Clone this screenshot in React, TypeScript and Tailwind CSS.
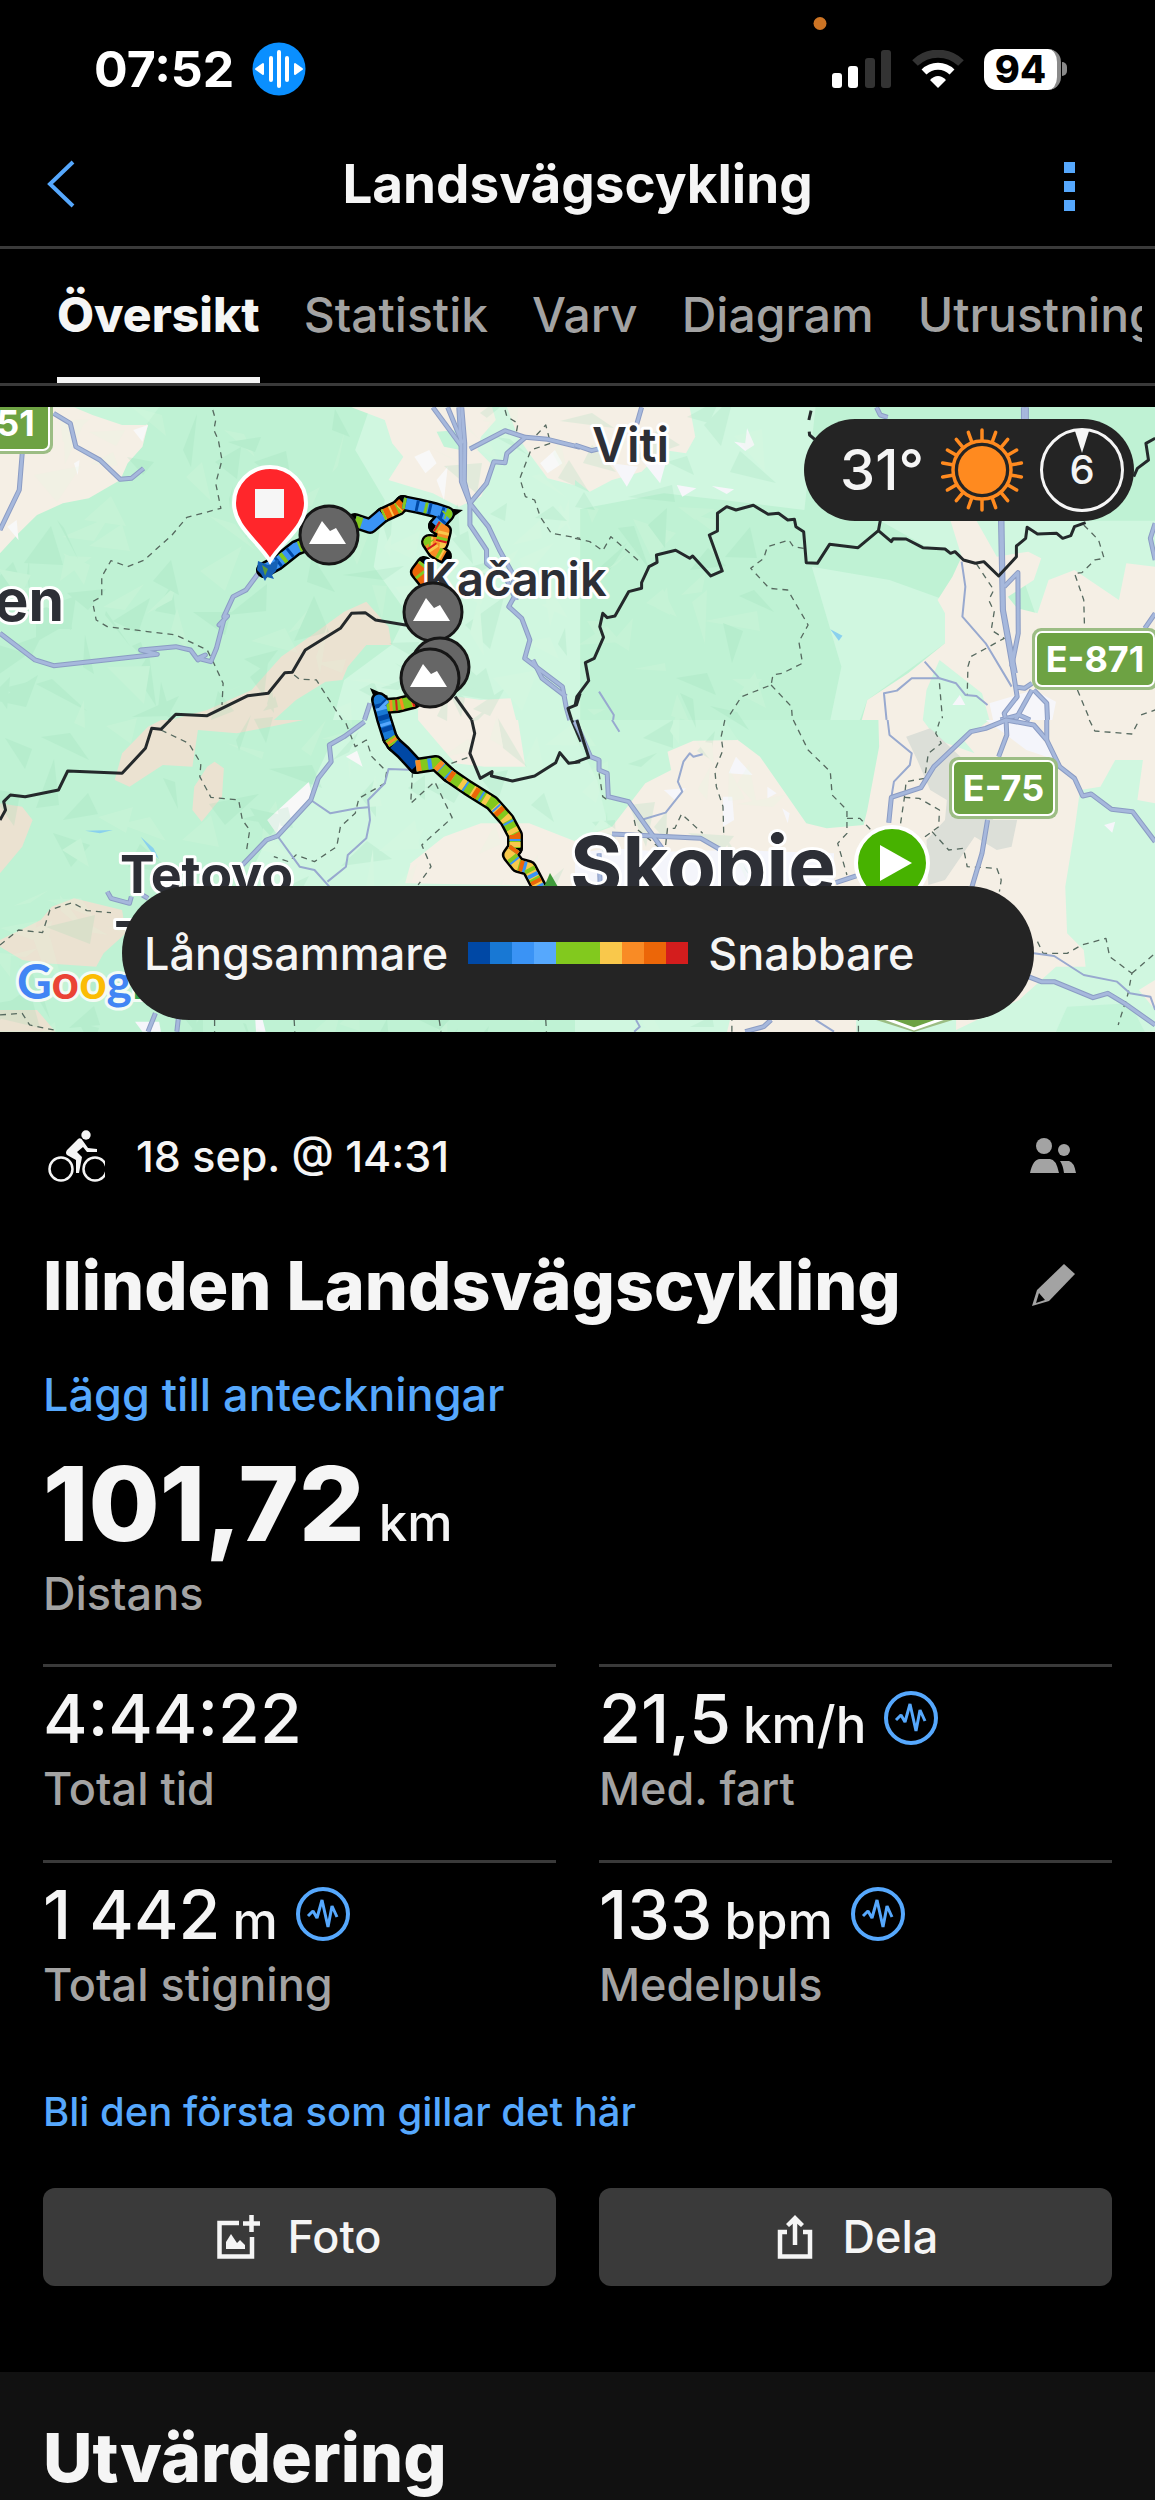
import { useState } from 'react';

const TABS = ['Översikt', 'Statistik', 'Varv', 'Diagram', 'Utrustning'];

const SPEED_COLORS = [
  'bg-[#0048a5]', 'bg-[#1878d4]', 'bg-[#3a93f5]', 'bg-[#56a8fd]', 'bg-[#82c91e]',
  'bg-[#82c91e]', 'bg-[#f9c84b]', 'bg-[#f98b25]', 'bg-[#ec6608]', 'bg-[#d41d1d]',
];

interface Stat {
  value: string;
  unit?: string;
  label: string;
  sensor?: boolean;
}

const STATS: Stat[] = [
  { value: '4:44:22', label: 'Total tid' },
  { value: '21,5', unit: 'km/h', label: 'Med. fart', sensor: true },
  { value: '1 442', unit: 'm', label: 'Total stigning', sensor: true },
  { value: '133', unit: 'bpm', label: 'Medelpuls', sensor: true },
];

interface Tile {
  transform: string;
  areas: [string, string][];
  roads: string[];
  lanes: string[];
  trails: string[];
  borders: string[];
}

// The map is stored as four tiles, each with its own local grid
const TILES: Tile[] = [
  {
    transform: 'matrix(0.37 0 0 0.3333 0 -7)',
    areas: [
      ['#d0f7e0', 'M1000 22H1568V960H900L930 840L1058 735L1100 640L1010 500L1040 300L960 150Z'],
      ['#f5efe5', 'M0 22H320L400 75L385 140L345 190L325 240L240 295L170 310L100 345L50 400L0 460Z'],
      ['#c8f5da', 'M200 22H430L395 75L330 75L250 45Z'],
      ['#f5efe5', 'M950 22H1330L1340 60L1300 110L1290 150L1335 200L1300 290L1240 320L1170 280L1110 260L1050 240L1090 170L1060 130L1040 60Z'],
      ['#f5efe5', 'M1370 22H1568V260L1480 235L1430 160L1400 110Z'],
      ['#c4f4d8', 'M1180 95L1240 90L1245 150L1200 140Z'],
      ['#f8f8f8', 'M1120 170L1160 150L1180 190L1150 220ZM1180 240L1210 200L1200 300ZM1460 190L1500 150L1520 190L1480 220ZM360 90L400 75L385 125ZM200 190L215 180L210 225ZM20 380L45 360L50 420Z'],
      ['#ebe2d1', 'M990 605L1050 680L1058 735L990 735L940 800L925 840L880 845L800 900L740 960H460L560 930L680 870L760 770L850 700L930 635Z'],
      ['#f5efe5', 'M1130 900L1240 890L1300 900L1380 895L1395 960H1130Z'],
    ],
    roads: [
      '145 40 190 70 205 140 270 180 325 238 355 235 388 205',
      '60 160 52 270 0 390',
      '705 510 665 570 630 590 605 650 615 648 592 675 605 660 585 745 570 785 535 775 555 765 535 780 515 750 475 740 380 750 425 763 145 797 95 780 0 700',
      '1240 22 1246 130 1247 245 1270 310 1270 375 1315 450 1315 490 1370 540 1390 590 1375 620 1410 655 1432 720 1418 775 1460 810 1520 860 1530 920 1540 960',
      '1248 22 1256 130 1255 245 1270 310',
      '1170 22 1245 135',
      '1210 22 1250 130',
      '1270 147 1365 92 1420 112 1480 118 1568 142',
      '1420 112 1370 160 1365 188 1335 185 1315 250 1270 310 1320 380 1350 450 1385 520 1395 600',
      '1440 780 1465 835 1530 890',
      '1000 910 985 960',
    ],
    lanes: [],
    trails: [
      '575 30 583 60 578 90 590 120 600 180 583 250 597 325 505 352 465 405 390 480 345 500 300 482 275 530 275 590 250 605 260 660 290 680 475 705 560 750 578 790 603 850 600 915',
      '1365 30 1370 50 1400 70 1395 100',
      '1450 105 1475 75 1488 130 1435 150 1405 235 1420 290 1445 300 1460 350 1490 400 1568 415',
      '795 825 810 838 855 840 925 960',
    ],
    borders: [
      '1100 676 1015 660 987 638 950 640 920 685 825 750 790 817 770 818 725 880 670 887 560 947 475 943 458 962',
      '1230 890 1275 960',
      '1568 880 1558 915 1535 925 1545 960',
    ],
  },
  {
    transform: 'matrix(0.37 0 0 0.3333 575 -7)',
    areas: [
      ['#d0f7e0', 'M0 22H650L620 330L400 300L240 280L0 330Z'],
      ['#d0f7e0', 'M640 500L850 540L1000 600L1000 730L790 900L770 960L690 960L720 800Z'],
      ['#f5efe5', 'M0 22H310L325 110L300 160L240 150L180 215L100 240L40 275L0 240Z'],
      ['#d0f7e0', 'M825 362H1568V620L1250 660L1200 500L950 440Z'],
      ['#f5efe5', 'M1015 362H1085L1140 470L1225 455L1260 475L1240 540L1170 590L1195 625L1250 640L1280 540L1350 510L1470 600L1490 490L1568 500V960H775L790 900L900 820L1000 730V640L980 600L1020 530L1045 470Z'],
      ['#d0f7e0', 'M985 780L1100 880L1120 960H940L950 870Z'],
      ['#f6f6fa', 'M430 125L460 130L465 85L485 135L460 153ZM275 255L328 265L290 290ZM370 258L430 268L410 282ZM100 190L170 200L140 260ZM180 180L245 190L230 250ZM1120 910L1240 870L1300 905L1290 960H1130ZM1020 915L1040 885L1055 915Z'],
      ['#8ad1ee', 'M690 688L723 707L713 722Z'],
    ],
    roads: [
      '1212 22 1212 60',
      '1220 22 1220 60',
      '1150 362 1155 630 1185 820 1195 890 1160 940 1165 960',
      '1154 362 1158 630 1190 820',
      '1160 560 1197 518 1198 700 1180 800',
      '1195 862 1215 865 1235 850',
      '1235 870 1190 960',
      '1240 870 1275 910 1277 960',
      '1150 960 1200 945 1230 960',
      '1568 370 1555 415 1568 480',
      '1568 640 1540 685',
      '815 22 825 45 845 52',
      '0 135 45 152 70 145',
      '180 22 165 80',
    ],
    lanes: [
      '1045 485 1055 560 1047 650 1110 730 1180 860',
      '842 960 835 880 870 872 910 835 985 835 945 785',
      '985 835 1030 850 1055 885 1085 888 1115 915',
      '65 875 105 945 103 960',
    ],
    trails: [
      '0 415 40 425 75 452 97 410 180 490',
      '618 445 590 440 578 420 520 440 510 475 475 505 525 565 575 570 630 675 605 725 615 790 560 820 535 825 530 855 450 890 415 950',
      '530 855 585 920 587 950',
      '1085 492 1132 570 1118 600 1133 635 1125 690 1160 715 1070 770 1062 800 1060 885',
      '1375 375 1415 420 1430 475 1405 480 1370 518 1350 520 1375 600 1377 680',
      '1358 870 1388 950',
      '985 850 993 955',
      '1530 945 1568 930',
    ],
    borders: [
      '0 918 5 890 37 842 28 788 52 775 77 712 67 680 75 640 87 653 108 648 145 575 180 565 180 548 200 500 222 487 220 465 272 451 310 475 318 468 367 528 398 513 363 405 385 393 385 340 410 320 435 330 482 316 522 343 550 340 575 360 593 358 597 380 618 395 625 488 655 490 688 433 765 443 820 392 825 362',
      '638 32 632 60',
      '633 95 634 105 648 118',
      '820 392 855 425 860 416 895 417 940 443 1000 447 1015 460 1027 455 1050 480 1082 490 1105 485 1145 528 1193 470 1193 438 1218 415 1222 382 1250 402 1302 400 1318 415 1340 407 1350 380 1380 368',
      '1510 230 1520 205 1550 180 1543 130 1568 115',
    ],
  },
  {
    transform: 'matrix(0.37 0 0 0.3333 0 313)',
    areas: [
      ['#d0f7e0', 'M985 0H1568V500H660L720 360L840 200L890 80Z'],
      ['#f8f8f8', 'M835 185L845 240L750 345L722 300ZM935 110L965 92L980 140Z'],
      ['#f5efe5', 'M1130 0H1400L1420 140L1310 140L1230 130Z'],
      ['#f5efe5', 'M1095 490L1110 430L1200 350L1300 310L1430 310L1568 370V500Z'],
      ['#ebe2d1', 'M435 0H820L640 40L535 30L520 140L440 135L350 200L310 180L330 100L400 20Z'],
      ['#ebe2d1', 'M580 125L605 145L600 230L545 305L520 270L525 200L560 140Z'],
      ['#ebe2d1', 'M0 250L60 260L88 300L60 380L0 460Z'],
      ['#ebe2d1', 'M0 660L110 600L140 560L200 535L330 570L340 640L280 700L260 740L120 730L60 720L0 680Z'],
      ['#ebe2d1', 'M0 870L100 870L150 935H0Z'],
      ['#8ad1ee', 'M230 332L305 330L270 340ZM380 350L415 385L430 418L405 390Z'],
      ['#f6f6fa', 'M365 905H430L435 935H385ZM690 900H710L718 935H692Z'],
      ['#42a05c', 'M360 800L375 820V838H362Z'],
    ],
    roads: [
      '985 5 930 50 890 75 895 125 860 175 840 240 750 348 720 360 655 435',
      '290 515 300 535 350 550 355 530',
      '385 525 400 535',
      '420 880 400 935',
      '482 895 478 935',
      '1555 0 1568 40',
    ],
    lanes: [
      '840 240 893 280 965 265 995 262',
      '1125 150 1050 147 1040 190 995 240 1000 300 990 355 940 405 935 440 885 485',
      '750 348 810 440 850 450 890 500',
    ],
    trails: [
      '435 30 510 70 543 130 540 170 570 232 645 240 655 300 675 330 665 400',
      '935 10 960 80 990 60 1005 110 1045 155 1040 190 970 235 960 280 920 320 910 380 850 425 800 405 780 425 740 410',
      '1115 155 1110 250 1175 185 1222 293 1140 375 1165 440 1130 495',
      '1220 130 1270 110',
      '0 675 50 630 115 638 135 570 195 548 235 572 300 578',
      '0 885 60 880 80 915 145 930',
      '580 900 580 935',
      '795 900 797 935',
      '1187 900 1192 935',
      '1475 900 1477 935',
    ],
    borders: [
      '460 0 435 28 410 25 393 85 330 160 183 153 158 210 68 230 28 225 10 245 15 270 0 300',
      '1275 0 1283 40 1270 100 1298 175 1330 155 1328 168 1385 183 1445 168 1502 128 1513 98 1537 130 1568 125',
      '1545 0 1570 65',
    ],
  },
  {
    transform: 'matrix(0.37 0 0 0.3333 575 313)',
    areas: [
      ['#f5efe5', 'M0 0H1568V940H0Z'],
      ['#c8f5da', 'M0 0H420L440 60L320 62L250 95L260 150L190 190L100 320L0 360Z'],
      ['#d0f7e0', 'M0 50L60 180L90 320L0 360Z'],
      ['#c3f4d8', 'M405 0H820L822 80L790 270L780 315L680 325L625 310L500 110L440 60Z'],
      ['#d0f7e0', 'M940 0H1120L1050 60L1080 100L980 60Z'],
      ['#dcdfd8', 'M895 50L960 25L1060 130L1130 300L1195 300L1180 380L1140 390L1080 350L1000 480L955 495L950 360L1000 300L1005 240L960 210L925 120Z'],
      ['#f4f5fb', 'M1110 0H1230L1300 120L1220 90L1160 40Z'],
      ['#d0f7e0', 'M1325 500L1350 330L1365 210L1420 200L1460 120L1535 120L1520 240L1568 250V935H1020L1200 840L1300 740L1380 740L1375 690L1330 640Z'],
      ['#c3f4d8', 'M1330 860L1500 850L1540 935H1300Z'],
      ['#f5efe5', 'M1524 810L1568 780V870Z'],
      ['#d0f7e0', 'M0 895H420L410 940H0ZM760 895H1030V940H760Z'],
      ['#f6f6fa', 'M415 160L435 110L480 165ZM400 230H425L430 300L400 320ZM520 200L545 220L520 235ZM560 265L580 280L575 310ZM240 210L300 205L270 240ZM1430 315L1460 305L1452 338Z'],
      ['#f4f5fb', 'M0 400L100 385L240 395L420 390L700 400V500H0Z'],
    ],
    roads: [
      '0 5 15 40 42 110 65 120 65 150 87 160 90 230 145 245 235 385',
      '100 342 340 355 395 390',
      '848 308 855 232 935 203 970 140 1070 35 1110 25 1165 0 1240 15 1275 60 1310 140 1350 175 1372 228 1395 222 1450 268 1507 275 1568 365',
      '1165 0 1167 45 1145 110',
      '1115 300 1100 400 1073 500',
      '1275 0 1275 60',
      '1225 770 1260 785 1295 785 1400 833 1440 820 1485 850 1568 915',
      '705 488 760 468',
      '65 400 68 495',
      '460 935 510 920 530 900',
    ],
    lanes: [
      '185 298 245 278 290 215 278 185 293 125 310 100 320 110 345 103',
      '845 0 850 45 910 100 905 135 862 185 855 232',
      '1240 700 1295 708 1375 765 1465 785 1500 820 1555 830 1568 870',
      '100 0 120 35',
      '160 935 175 920 165 900',
      '650 900 700 935',
    ],
    trails: [
      '405 0 395 50 400 90 378 150 382 200 400 260 402 345',
      '590 0 630 90 690 155 695 225 735 270 735 340 710 370 735 465',
      '735 295 770 295 800 330',
      '880 310 890 235 895 185 945 175 955 100 990 70 975 40 985 5',
      '890 232 930 235 985 270 983 320 940 355',
      '965 335 1010 390 1050 385 1060 440 1140 445 1152 480 1147 515',
      '1250 665 1265 700 1330 700 1370 675 1435 655 1445 710 1505 760 1495 820 1468 915',
      '1505 760 1568 700',
      '1390 0 1405 33 1505 42 1525 0',
      '245 375 250 325 270 325 288 282 345 340',
      '160 300 165 325 235 390',
      '65 160 75 230 95 245',
      '424 935 424 900',
      '766 935 766 900',
    ],
    borders: ['5 0 37 112 0 127'],
  },
];

interface Leg {
  points: string;
  color: string;
  stripes: [string, string][];
}

const LEGS: Leg[] = [
  { points: '264,163 277,156 296,141 306,137', color: '#3a93f5', stripes: [['#82c91e', '4 17'], ['#0048a5', '3 12']] },
  { points: '355,114 370,119 383,108', color: '#3a93f5', stripes: [['#82c91e', '7 30']] },
  { points: '383,108 398,101 403,96', color: '#ec6608', stripes: [['#f9c84b', '2 6'], ['#82c91e', '2 13']] },
  { points: '403,96 418,99 435,103 447,107 436,119', color: '#3a93f5', stripes: [['#0048a5', '3 10'], ['#82c91e', '3 19']] },
  { points: '436,119 444,124 441,136 429,135 435,144 444,149', color: '#f98b25', stripes: [['#f9c84b', '3 7'], ['#82c91e', '3 13'], ['#d41d1d', '2 17']] },
  { points: '424,157 418,165 426,175', color: '#ec6608', stripes: [['#82c91e', '3 9']] },
  { points: '414,294 398,298 385,299', color: '#82c91e', stripes: [['#f98b25', '3 8'], ['#d41d1d', '2 15']] },
  { points: '385,299 379,293 384,312 390,331', color: '#1878d4', stripes: [['#0048a5', '5 7'], ['#56a8fd', '3 13']] },
  { points: '390,331 394,337', color: '#f98b25', stripes: [['#82c91e', '2 3']] },
  { points: '394,337 403,345 416,359', color: '#0048a5', stripes: [] },
  { points: '416,359 436,356 449,368', color: '#82c91e', stripes: [['#3a93f5', '4 8'], ['#f98b25', '5 17']] },
  { points: '449,368 468,381 492,396 507,413 515,428 515,441', color: '#82c91e', stripes: [['#f9c84b', '5 9'], ['#3a93f5', '2 17'], ['#ec6608', '5 25']] },
  { points: '515,441 510,448 518,458 529,461 540,482', color: '#f9c84b', stripes: [['#3a93f5', '4 9'], ['#82c91e', '4 7'], ['#ec6608', '4 19']] },
];

const CLIMBS = [[329, 128], [433, 205], [440, 260], [430, 271]];

// Small deterministic generator so that the hill shading is stable between renders
function buildFacets(count: number) {
  let seed = 41;
  const rnd = () => {
    seed = (seed * 16807) % 2147483647;
    return seed / 2147483647;
  };
  return Array.from({ length: count }, () => {
    const x = rnd() * 760;
    const y = rnd() * 640;
    const pts = [0, 1, 2].map((i) => {
      const a = (i + rnd()) * 2.09;
      const r = 6 + rnd() * 26;
      return `${Math.round(x + Math.cos(a) * r)},${Math.round(y + Math.sin(a) * r)}`;
    });
    return { points: pts.join(' '), fill: rnd() > 0.5 ? '#8fd9b0' : '#e2fbe0' };
  });
}

const FACETS = buildFacets(320);

function RoadSign({ x, y, width, label }: { x: number; y: number; width: number; label: string }) {
  return (
    <g>
      <rect x={x} y={y} width={width} height="62" rx="9" fill="#9cbd84" />
      <rect x={x + 3} y={y + 3} width={width - 6} height="56" rx="7" fill="#fff" />
      <rect x={x + 5} y={y + 5} width={width - 10} height="52" rx="5" fill="#6da243" />
      <text x={x + width / 2} y={y + 44} textAnchor="middle" fontSize="36" fontWeight="700" fill="#fff">
        {label}
      </text>
    </g>
  );
}

function Pin({ x, y, color, children }: { x: number; y: number; color: string; children: React.ReactNode }) {
  return (
    <g transform={`translate(${x} ${y})`}>
      <path
        d="M0 58C-12 38 -36 24 -36 0A36 36 0 0 1 36 0C36 24 12 38 0 58Z"
        fill={color}
        stroke="#fff"
        strokeWidth="4"
      />
      {children}
    </g>
  );
}

function RouteMap() {
  return (
    <svg viewBox="0 0 1155 625" className="block w-full" role="img" aria-label="Karta">
      <rect width="1155" height="625" fill="#bff2d4" />
      {TILES.map((tile) => (
        <g key={tile.transform} transform={tile.transform}>
          {tile.areas.map(([fill, d]) => (
            <path key={d} d={d} fill={fill} />
          ))}
        </g>
      ))}
      <g opacity="0.18">
        {FACETS.map((f, i) => (
          <polygon key={i} points={f.points} fill={f.fill} />
        ))}
      </g>
      {TILES.map((tile) => (
        <g key={tile.transform} transform={tile.transform} fill="none" strokeLinejoin="round">
          {tile.trails.map((p) => (
            <polyline key={p} points={p} stroke="#56695f" strokeWidth="1.3" strokeDasharray="6 5" vectorEffect="non-scaling-stroke" />
          ))}
          {tile.lanes.map((p) => (
            <polyline key={p} points={p} stroke="#98a9cf" strokeWidth="2" vectorEffect="non-scaling-stroke" />
          ))}
          {tile.roads.map((p) => (
            <polyline key={p} points={p} stroke="#8b9cc4" strokeWidth="5" vectorEffect="non-scaling-stroke" />
          ))}
          {tile.roads.map((p) => (
            <polyline key={`${p}-in`} points={p} stroke="#a6b8dc" strokeWidth="3" vectorEffect="non-scaling-stroke" />
          ))}
          {tile.borders.map((p) => (
            <polyline key={p} points={p} stroke="#24292b" strokeWidth="3" vectorEffect="non-scaling-stroke" />
          ))}
        </g>
      ))}

      {/* activity track: black casing, then each leg with its speed stripes */}
      <g fill="none" strokeLinejoin="round">
        {LEGS.map((leg) => (
          <polyline key={leg.points} points={leg.points} stroke="#000" strokeWidth="16" strokeLinecap="round" />
        ))}
        <path d="M446 101L463 103L446 115ZM370 281L388 289L378 300Z" fill="#000" />
        {LEGS.map((leg) => (
          <g key={leg.points}>
            <polyline points={leg.points} stroke={leg.color} strokeWidth="11" />
            {leg.stripes.map(([color, dash]) => (
              <polyline key={color} points={leg.points} stroke={color} strokeWidth="11" strokeDasharray={dash} />
            ))}
          </g>
        ))}
      </g>
      <path d="M258 154L268 158L279 152L276 164L272 168L274 172L267 170L265 174L261 167L257 163Z" fill="#1661b5" />
      <path d="M262 158L268 162L265 169Z" fill="#5a9a3c" />
      <path d="M544 480L550 466L558 480Z" fill="#3f9a3a" />

      <g fontFamily="Inter, sans-serif" fill="#2d2f36" stroke="#fff" strokeWidth="6" strokeLinejoin="round" paintOrder="stroke">
        <text x="592" y="55" fontSize="48" fontWeight="600">Viti</text>
        <text x="424" y="189" fontSize="47" fontWeight="600">Kačanik</text>
        <text x="64" y="214" fontSize="57" fontWeight="700" textAnchor="end">en</text>
        <text x="120" y="486" fontSize="52" fontWeight="700">Tetovo</text>
        <text x="114" y="553" fontSize="54" fontWeight="600">Т</text>
        <text x="570" y="487" fontSize="80" fontWeight="700">Skopje</text>
      </g>

      {CLIMBS.map(([x, y]) => (
        <g key={`${x}-${y}`} transform={`translate(${x} ${y})`}>
          <circle r="29" fill="#666" stroke="#161616" strokeWidth="3" />
          <path d="M-20 9L-7 -14L1 -4L7 -7L17 9Z" fill="#fff" />
        </g>
      ))}

      <g fontFamily="Inter, sans-serif">
        <RoadSign x={-22} y={-15} width={75} label="51" />
        <RoadSign x={1032} y={221} width={126} label="E-871" />
        <RoadSign x={949} y={350} width={109} label="E-75" />
      </g>
      <path d="M873 612L914 625L956 612V606H873Z" fill="#9cbd84" />
      <path d="M876 608L914 622L953 608Z" fill="#6da243" stroke="#fff" strokeWidth="3" />

      <Pin x={270} y={96} color="#ff262b">
        <rect x="-15" y="-14" width="29" height="29" fill="#f6f6f6" />
      </Pin>
      <Pin x={892} y={456} color="#47b200">
        <path d="M-12 -18L20 0L-12 18Z" fill="#fff" />
      </Pin>

      <text x="17" y="592" fontFamily="Lato, sans-serif" fontSize="48" fontWeight="700" stroke="#f3fbf5" strokeWidth="6" paintOrder="stroke">
        <tspan fill="#4285f4">G</tspan>
        <tspan fill="#ea4335">o</tspan>
        <tspan fill="#fbbc04">o</tspan>
        <tspan fill="#4285f4">g</tspan>
        <tspan fill="#34a853">l</tspan>
        <tspan fill="#ea4335">e</tspan>
      </text>
    </svg>
  );
}

const RAYS = Array.from({ length: 18 }, (_, i) => i * 20);

function SunIcon() {
  return (
    <svg viewBox="-42 -42 84 84" className="size-[84px]" aria-hidden="true">
      <circle r="24" fill="#ff8a1f" />
      <circle r="29" fill="none" stroke="#ff8a1f" strokeWidth="3.5" />
      {RAYS.map((deg) => (
        <line key={deg} y1="-30" y2="-40" stroke="#ff8a1f" strokeWidth="3.5" strokeLinecap="round" transform={`rotate(${deg})`} />
      ))}
    </svg>
  );
}

function SensorIcon() {
  return (
    <svg viewBox="-27 -27 54 54" className="size-[54px]" fill="none" stroke="#56a8fd" aria-hidden="true">
      <circle r="25" strokeWidth="4" />
      <path d="M-15 2L-10 -3L-6 4L-1 -14L5 13L9 -8L14 3" strokeWidth="3" strokeLinejoin="bevel" />
    </svg>
  );
}

function StatusBar() {
  return (
    <div className="relative flex h-[122px] items-center justify-between pt-4 pr-[88px] pl-[94px] text-white">
      <span className="absolute top-[17px] left-[71%] size-[13px] -translate-x-1/2 rounded-full bg-[#cd7424]" />
      <div className="flex items-center gap-[18px]">
        <span className="text-[50px] leading-none font-bold">07:52</span>
        <svg viewBox="-27 -27 54 54" className="size-[54px]" aria-hidden="true">
          <circle r="26.5" fill="#0a8fff" />
          <path d="M-8 -11V11M0 -17V17M8 -11V11" stroke="#fff" strokeWidth="4" strokeLinecap="round" />
          <path d="M-23 0L-16 -5V5ZM23 0L16 -5V5Z" fill="#fff" stroke="#fff" strokeWidth="2" strokeLinejoin="round" />
        </svg>
      </div>
      <div className="flex items-center gap-5">
        <svg viewBox="0 0 60 38" className="h-[38px] w-[60px]" aria-hidden="true">
          <rect x="0" y="23" width="10" height="15" rx="3" fill="#fff" />
          <rect x="16" y="16" width="10" height="22" rx="3" fill="#fff" />
          <rect x="33" y="8" width="10" height="30" rx="3" fill="#333" />
          <rect x="49" y="0" width="10" height="38" rx="3" fill="#333" />
        </svg>
        <svg viewBox="0 0 52 38" className="h-[38px] w-[52px]" fill="none" aria-hidden="true">
          <path d="M3 13A33 33 0 0 1 49 13" stroke="#333" strokeWidth="8" />
          <path d="M12 22A20 20 0 0 1 40 22" stroke="#fff" strokeWidth="7" />
          <path d="M18 30Q26 22 34 30L26 38Z" fill="#fff" />
        </svg>
        <div className="flex items-center gap-px">
          <span className="flex h-[41px] w-[77px] items-center justify-center rounded-[13px] border-r-4 border-[#8a8a8a] bg-white text-[38px] leading-none font-extrabold text-black">
            94
          </span>
          <span className="h-[14px] w-[5px] rounded-r-full bg-[#8a8a8a]" />
        </div>
      </div>
    </div>
  );
}

function StatCell({ stat }: { stat: Stat }) {
  return (
    <div className="h-[196px] border-t-3 border-[#3a3a3a] pt-[17px]">
      <div className="flex h-[68px] items-center">
        <p className="flex items-baseline gap-3 font-medium">
          <span className="text-[68px] leading-[68px]">{stat.value}</span>
          {stat.unit && <span className="text-[51px] leading-none">{stat.unit}</span>}
        </p>
        {stat.sensor && (
          <button type="button" aria-label={`Sensor: ${stat.label}`} className="ml-[18px]">
            <SensorIcon />
          </button>
        )}
      </div>
      <p className="mt-[7px] text-[45px] leading-[60px] font-medium text-[#a3a3a3]">{stat.label}</p>
    </div>
  );
}

export default function App() {
  const [active, setActive] = useState(TABS[0]);

  return (
    <div className="min-h-screen overflow-hidden bg-black font-[Inter,sans-serif] text-[#f5f5f5]">
      <StatusBar />

      <header className="flex h-[127px] items-center justify-between border-b-3 border-[#3a3a3a] px-[46px]">
        <button type="button" aria-label="Tillbaka" className="w-20">
          <svg viewBox="0 0 30 48" className="h-12 w-[30px]" fill="none" stroke="#56a8fd" strokeWidth="4" aria-hidden="true">
            <path d="M27 2L4 24L27 46" />
          </svg>
        </button>
        <h1 className="text-[53px] leading-none font-bold">Landsvägscykling</h1>
        <button type="button" aria-label="Meny" className="flex w-20 flex-col items-center gap-2 pt-1">
          <span className="size-[11px] bg-[#56a8fd]" />
          <span className="size-[11px] bg-[#56a8fd]" />
          <span className="size-[11px] bg-[#56a8fd]" />
        </button>
      </header>

      <nav className="mb-[21px] h-[137px] border-b-3 border-[#3a3a3a] pr-[13px]">
        <div className="flex h-[134px] gap-[44px] overflow-hidden pl-[57px]">
          {TABS.map((tab) => (
            <button
              key={tab}
              type="button"
              onClick={() => setActive(tab)}
              className={
                tab === active
                  ? 'shrink-0 border-b-6 border-[#f5f5f5] pt-1 text-[48px] font-extrabold'
                  : 'shrink-0 border-b-6 border-transparent pt-1 text-[48px] font-medium text-[#a3a3a3]'
              }
            >
              {tab}
            </button>
          ))}
        </div>
      </nav>

      <section className="relative">
        <RouteMap />
        <div className="absolute top-3 right-[21px] flex h-[102px] items-center rounded-full bg-[#242424] pr-[10px] pl-9">
          <span className="mr-4 text-[56px] leading-none font-medium">31°</span>
          <SunIcon />
          <span className="relative ml-4 flex size-[84px] items-center justify-center rounded-full border-3 border-[#f5f5f5] text-[40px] leading-none font-medium">
            6
            <svg viewBox="0 0 14 22" className="absolute top-0 left-8 h-[22px] w-[14px]" aria-hidden="true">
              <path d="M0 0H14L7 22Z" fill="#f5f5f5" />
            </svg>
          </span>
        </div>
        <div className="absolute right-[121px] bottom-3 left-[122px] flex h-[134px] items-center gap-5 rounded-full bg-[#242424] pl-[22px] text-[45px] leading-none font-medium">
          <span>Långsammare</span>
          <span className="flex">
            {SPEED_COLORS.map((color, i) => (
              <span key={i} className={`h-[22px] w-[22px] ${color}`} />
            ))}
          </span>
          <span>Snabbare</span>
        </div>
      </section>

      <main className="px-[43px] pt-[88px]">
        <div className="flex h-[72px] items-center pr-9">
          <svg viewBox="0 0 62 54" className="h-[54px] w-[62px]" aria-hidden="true">
            <g fill="none" stroke="#f5f5f5" strokeWidth="2.5">
              <circle cx="18" cy="40" r="11.5" />
              <circle cx="52" cy="40" r="11.5" />
            </g>
            <circle cx="43" cy="6" r="4.7" fill="#f5f5f5" />
            <path d="M35 10Q38 8 40 12L45 19L54 20V23H44L40 18L34 23L39 28L36 44H33V31L24 26Q22 24 24 21Z" fill="#f5f5f5" />
          </svg>
          <p className="ml-[31px] grow text-[43px] leading-none font-medium">18 sep. @ 14:31</p>
          <button type="button" aria-label="Synlighet">
            <svg viewBox="0 0 46 36" className="h-9 w-[46px]" fill="#a3a3a3" aria-hidden="true">
              <circle cx="14" cy="8" r="8" />
              <circle cx="34" cy="12" r="6" />
              <path d="M0 35Q3 21 10 21H20Q26 21 29 35ZM30 23H39Q44 24 46 35H34Q33 27 30 23Z" />
            </svg>
          </button>
        </div>

        <div className="mt-[49px] flex h-[88px] items-center justify-between pr-9">
          <h2 className="text-[68px] leading-none font-extrabold">Ilinden Landsvägscykling</h2>
          <button type="button" aria-label="Redigera namn">
            <svg viewBox="0 0 46 46" className="size-[46px]" aria-hidden="true">
              <path d="M34 2L45 12L19 39L2 44L7 28Z" fill="#a3a3a3" />
              <path d="M9 31L15 38L6 41Z" fill="#000" />
            </svg>
          </button>
        </div>

        <a href="#anteckningar" className="mt-9 block text-[45px] leading-[60px] font-medium text-[#56a8fd]">
          Lägg till anteckningar
        </a>

        <p className="mt-[29px] flex items-baseline gap-[14px]">
          <span className="text-[103px] leading-[100px] font-extrabold">101,72</span>
          <span className="text-[51px] leading-none font-medium">km</span>
        </p>
        <p className="mt-[10px] mb-10 text-[45px] leading-[60px] font-medium text-[#a3a3a3]">Distans</p>

        <div className="grid grid-cols-2 gap-x-[43px]">
          {STATS.map((stat) => (
            <StatCell key={stat.label} stat={stat} />
          ))}
        </div>

        <a href="#gilla" className="mt-[26px] block text-[40px] leading-[60px] font-medium text-[#56a8fd]">
          Bli den första som gillar det här
        </a>

        <div className="mt-[46px] grid grid-cols-2 gap-x-[43px] text-[45px] font-medium">
          <button type="button" className="flex h-[98px] items-center justify-center gap-[26px] rounded-xl bg-[#3a3a3a]">
            <svg viewBox="0 0 44 44" className="size-11" aria-hidden="true">
              <path d="M22 8H2.500V41.500H35V22" fill="none" stroke="#f5f5f5" strokeWidth="4.500" />
              <path d="M34.500 0V17M26 8.500H43" stroke="#f5f5f5" strokeWidth="4.500" />
              <path d="M9 34V27L14 19L20 28L23 25L28 30V34Z" fill="#f5f5f5" />
            </svg>
            Foto
          </button>
          <button type="button" className="flex h-[98px] items-center justify-center gap-[26px] rounded-xl bg-[#3a3a3a]">
            <svg viewBox="0 0 44 44" className="size-11" aria-hidden="true">
              <path d="M14 17H7V41.500H37V17H30" fill="none" stroke="#f5f5f5" strokeWidth="4.500" />
              <path d="M22 4V30" stroke="#f5f5f5" strokeWidth="4.500" />
              <path d="M22 0L31 9L28 12L22 7L16 12L13 9Z" fill="#f5f5f5" />
            </svg>
            Dela
          </button>
        </div>
      </main>

      <section className="mt-[86px] h-[128px] bg-[#111] px-[43px] pt-[43px]">
        <h2 className="text-[68px] leading-[84px] font-extrabold">Utvärdering</h2>
      </section>
    </div>
  );
}
